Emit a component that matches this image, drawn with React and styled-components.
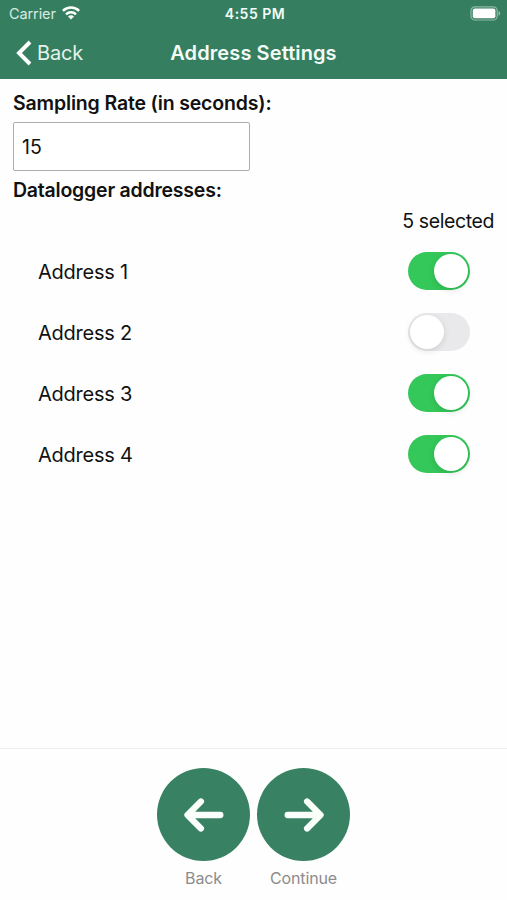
import React, { useState } from "react";
import styled, { createGlobalStyle } from "styled-components";

const initialAddresses = [
  { name: "Address 1", on: true },
  { name: "Address 2", on: false },
  { name: "Address 3", on: true },
  { name: "Address 4", on: true },
];

function App() {
  const [rate, setRate] = useState("15");
  const [addresses, setAddresses] = useState(initialAddresses);

  const toggle = (index) =>
    setAddresses(
      addresses.map((item, i) =>
        i === index ? { ...item, on: !item.on } : item
      )
    );

  return (
    <Screen>
      <GlobalStyle />
      <Header>
        <StatusBar>
          <Carrier>
            Carrier
            <WifiIcon />
          </Carrier>
          <Clock>4:55 PM</Clock>
          <StatusRight>
            <BatteryIcon />
          </StatusRight>
        </StatusBar>
        <NavBar>
          <NavBack>
            <ChevronIcon />
            Back
          </NavBack>
          <Title>Address Settings</Title>
        </NavBar>
      </Header>
      <Content>
        <Label $spacing="-0.16px">Sampling Rate (in seconds):</Label>
        <RateInput value={rate} onChange={(e) => setRate(e.target.value)} />
        <Label $spacing="-0.22px">Datalogger addresses:</Label>
        <Selected>5 selected</Selected>
        <List>
          {addresses.map((item, index) => (
            <Row key={item.name}>
              <Name>{item.name}</Name>
              <Switch
                role="switch"
                aria-checked={item.on}
                aria-label={item.name}
                $on={item.on}
                onClick={() => toggle(index)}
              >
                <Knob />
              </Switch>
            </Row>
          ))}
        </List>
      </Content>
      <Footer>
        <Action>
          <Circle aria-label="Back">
            <ArrowIcon />
          </Circle>
          <Caption>Back</Caption>
        </Action>
        <Action>
          <Circle aria-label="Continue">
            <ArrowIcon right />
          </Circle>
          <Caption>Continue</Caption>
        </Action>
      </Footer>
    </Screen>
  );
}

export default App;

const WifiIcon = () => (
  <svg width="18" height="14" viewBox="0 0 18 14" fill="none">
    <path d="M0.9 4.9a11.4 11.4 0 0 1 16.2 0" stroke="#fff" strokeWidth="2.6" />
    <path d="M4 8.3a7.2 7.2 0 0 1 10 0" stroke="#fff" strokeWidth="2.4" />
    <path d="M9 13.6 6 10.6a4.2 4.2 0 0 1 6 0z" fill="#fff" />
  </svg>
);

const BatteryIcon = () => (
  <svg width="31" height="15" viewBox="0 0 31 15">
    <rect
      x="1"
      y="0.8"
      width="26.2"
      height="13.2"
      rx="4"
      fill="none"
      stroke="#8fbaa7"
      strokeWidth="1.2"
    />
    <rect x="2.8" y="2.6" width="22.6" height="9.6" rx="2" fill="#fff" />
    <path d="M28.5 5.1c2.3 0.9 2.3 3.7 0 4.6z" fill="#8fbaa7" />
  </svg>
);

const ChevronIcon = () => (
  <svg width="16" height="26" viewBox="0 0 16 26" fill="none">
    <path d="M14 2 3 13l11 11" stroke="#fff" strokeWidth="3.9" />
  </svg>
);

const ArrowIcon = ({ right }) => (
  <svg width="40" height="34" viewBox="0 0 40 34" fill="none">
    <path
      d={
        right
          ? "M3.7 17h32.6M23.1 3.6 36.5 17 23.1 30.4"
          : "M36.3 17H3.7M16.9 3.6 3.5 17l13.4 13.4"
      }
      stroke="#fafffc"
      strokeWidth="6.3"
      strokeLinecap="round"
      strokeLinejoin="round"
    />
  </svg>
);

const GlobalStyle = createGlobalStyle`
  * {
    box-sizing: border-box;
  }
  body {
    margin: 0;
    background: #fff;
    font-family: Inter, "Liberation Sans", sans-serif;
  }
  button {
    border: 0;
    padding: 0;
    font: inherit;
    cursor: pointer;
  }
  svg {
    display: block;
    flex: none;
  }
`;

const Screen = styled.div`
  display: flex;
  flex-direction: column;
  height: 900px;
  color: #111;
  background: #fefefe;
`;

const Header = styled.header`
  height: 79px;
  background: #357f60;
  color: #f3fbf7;
`;

const StatusBar = styled.div`
  display: grid;
  grid-template-columns: 1fr auto 1fr;
  align-items: center;
  height: 26px;
  padding: 0 6px 0 9px;
  font-size: 14.5px;
`;

const Carrier = styled.div`
  display: flex;
  align-items: center;
  gap: 6px;
  letter-spacing: -0.1px;
  color: #d9ebe3;
`;

const Clock = styled.div`
  font-size: 14px;
  font-weight: 600;
  letter-spacing: 0.5px;
`;

const StatusRight = styled.div`
  display: flex;
  justify-content: flex-end;
`;

const NavBar = styled.div`
  display: grid;
  grid-template-columns: 1fr auto 1fr;
  align-items: center;
  height: 53px;
  padding: 0 16px;
`;

const NavBack = styled.button`
  display: flex;
  align-items: center;
  gap: 5px;
  background: none;
  color: #e3f2eb;
  font-size: 20px;
  letter-spacing: -0.2px;
`;

const Title = styled.h1`
  margin: 0;
  font-size: 20px;
  font-weight: 600;
  letter-spacing: 0.1px;
`;

const Content = styled.main`
  flex: 1;
  padding: 12px 13px 0;
`;

const Label = styled.div`
  font-size: 19.5px;
  font-weight: 600;
  line-height: 25px;
  letter-spacing: ${(props) => props.$spacing};
`;

const RateInput = styled.input`
  display: block;
  width: 237px;
  height: 49px;
  margin: 6px 0 7px;
  padding: 0 8px;
  border: 1.5px solid #adadad;
  border-radius: 2px;
  outline: none;
  background: #fff;
  color: #111;
  font: inherit;
  font-size: 19.5px;
`;

const Selected = styled.div`
  margin-top: 6px;
  text-align: right;
  font-size: 19.5px;
  line-height: 25px;
  letter-spacing: -0.4px;
`;

const List = styled.div`
  padding: 6px 24px 0 25px;
`;

const Row = styled.div`
  display: flex;
  align-items: center;
  justify-content: space-between;
  height: 61px;
  font-size: 20px;
  letter-spacing: -0.25px;
`;

const Name = styled.span`
  padding-top: 2px;
`;

const Switch = styled.button`
  display: flex;
  align-items: center;
  justify-content: ${(props) => (props.$on ? "flex-end" : "flex-start")};
  width: 62px;
  height: 38px;
  padding: 0 2px;
  border-radius: 19px;
  background: ${(props) => (props.$on ? "#34c759" : "#e9e9eb")};
`;

const Knob = styled.span`
  width: 34px;
  height: 34px;
  border-radius: 50%;
  background: #fff;
  box-shadow: 0 2px 6px rgba(0, 0, 0, 0.12);
`;

const Footer = styled.footer`
  display: flex;
  justify-content: center;
  gap: 7px;
  height: 152px;
  padding-top: 19px;
  border-top: 1px solid #ededed;
`;

const Action = styled.div`
  display: flex;
  flex-direction: column;
  align-items: center;
`;

const Circle = styled.button`
  display: flex;
  align-items: center;
  justify-content: center;
  width: 93px;
  height: 93px;
  border-radius: 50%;
  background: #388263;
`;

const Caption = styled.div`
  margin-top: 7px;
  font-size: 16px;
  line-height: 20px;
  letter-spacing: -0.15px;
  color: #8c8c8c;
`;
